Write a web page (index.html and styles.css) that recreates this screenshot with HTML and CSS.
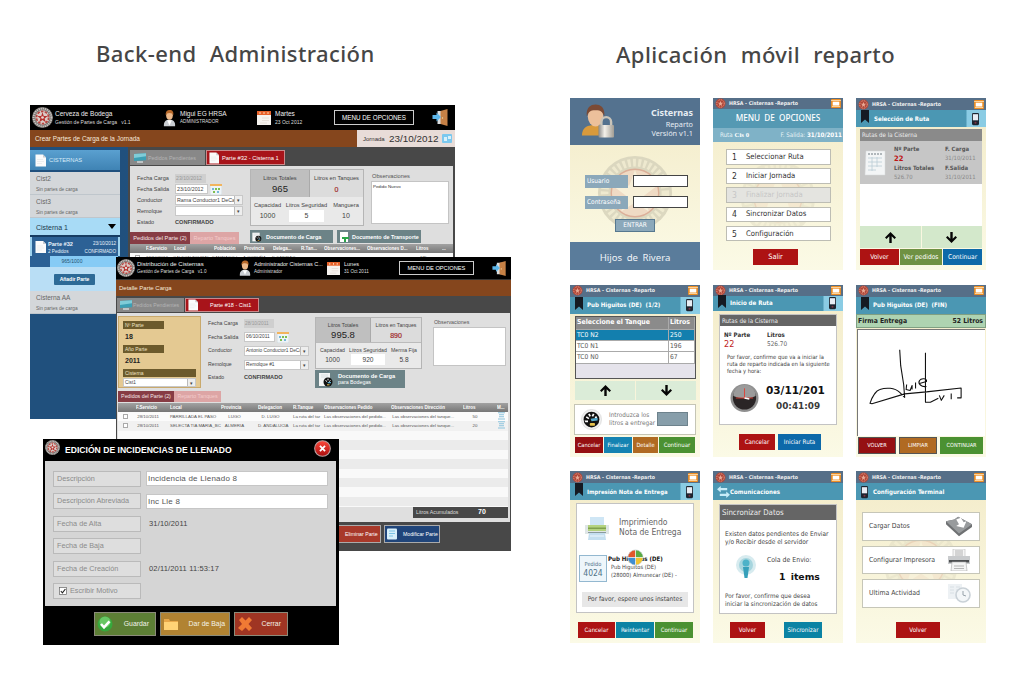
FILE: index.html
```html
<!DOCTYPE html>
<html lang="es">
<head>
<meta charset="utf-8">
<title>Cisternas</title>
<link rel="stylesheet" href="styles.css">
</head>
<body>
<svg class="defs" width="0" height="0">
  <defs>
    <linearGradient id="gRed" x1="0" y1="0" x2="0" y2="1"><stop offset="0" stop-color="#ff4a3d"/><stop offset="1" stop-color="#a80d0d"/></linearGradient>
    <linearGradient id="gMetal" x1="0" y1="0" x2="1" y2="0"><stop offset="0" stop-color="#8a8a8a"/><stop offset=".4" stop-color="#f4f1ea"/><stop offset="1" stop-color="#a19c93"/></linearGradient>
  </defs>
  <symbol id="logo" viewBox="0 0 20 20"><circle cx="10" cy="10" r="10" fill="#77726f"/><circle cx="10" cy="10" r="8.500" fill="none" stroke="#c9c5c2" stroke-width="1.800" stroke-dasharray="1.200 .8"/><circle cx="10" cy="10" r="6.800" fill="#d9cbc6"/><circle cx="10" cy="10" r="5.800" fill="none" stroke="#b8443f" stroke-width="1.600" stroke-dasharray="2.400 1.200"/><path d="M10 5l1.200 3.500 3.800.1-3 2.300 1.100 3.600-3.100-2.100-3.100 2.100L8 10.900 5 8.600l3.800-.1z" fill="#b5312d"/><circle cx="10" cy="10" r="1.300" fill="#ead9d4"/></symbol>
  <symbol id="logored" viewBox="0 0 20 20"><circle cx="10" cy="10" r="9" fill="#b04436"/><circle cx="10" cy="10" r="6.800" fill="none" stroke="#e0a08c" stroke-width="1.800" stroke-dasharray="2 1.600"/><path d="M10 5l1.300 3.500 3.700.2-3 2.300 1.100 3.500-3.100-2-3.100 2L8 11 5 8.700l3.700-.2z" fill="#e7a894"/></symbol>
  <symbol id="seal" viewBox="0 0 80 80"><circle cx="40" cy="40" r="39" fill="#d9d5bd"/><circle cx="40" cy="40" r="32" fill="none" stroke="#eee9cf" stroke-width="8" stroke-dasharray="3 2.500"/><circle cx="40" cy="40" r="25" fill="#efd8c2"/><path d="M40 16l6 16 17 .5-13.500 10.500 5 16.500L40 50 25.500 59.500l5-16.500L17 32.500 34 32z" fill="#f7efd9"/><circle cx="40" cy="40" r="25" fill="none" stroke="#d9a892" stroke-width="1.500"/></symbol>
  <symbol id="user" viewBox="0 0 14 18"><path d="M1 18c-.5-5 2-7 6-7s6.500 2 6 7z" fill="#c9cdd2"/><path d="M4.500 11.500L7 17l2.500-5.500z" fill="#fff"/><ellipse cx="7" cy="6" rx="3.600" ry="4.800" fill="#edb98a"/><path d="M3 6C2.500 1.500 5 .3 7.300.3c3 0 4.400 2.200 3.700 5.700-.8-1.500-1.500-2.400-4-2.400C4.500 3.600 4 4.300 3 6z" fill="#b8692a"/></symbol>
  <symbol id="cal" viewBox="0 0 14 14"><rect width="14" height="14" fill="#f6f3ef"/><rect width="14" height="4" fill="#e8622a"/><path d="M3 1v2M7 1v2M11 1v2" stroke="#fbd9b8"/><path d="M5 7h7M5 9.500h7M3 12h7" stroke="#e2d9d2" stroke-width=".8"/></symbol>
  <symbol id="calsm" viewBox="0 0 12 11"><rect y="1" width="12" height="10" fill="#eef4f7" stroke="#b9c4ca" stroke-width=".5"/><rect width="12" height="2" fill="#f2b45d"/><path d="M5 4h2v2H5zM8 4h2v2H8zM3 7h2v2H3z" fill="#7fbf4f"/><path d="M7 7h2v2H7zM2 4h2v2H2z" fill="#74b6d8"/></symbol>
  <symbol id="door" viewBox="0 0 16 17"><path d="M5 2h9v13H5z" fill="#d9dde0"/><path d="M8 2l7-2v17l-7-2z" fill="#c68146"/><circle cx="10" cy="9" r=".7" fill="#f7d9a0"/><path d="M0 6h4V3.500L8.500 8 4 12.500V10H0z" fill="#5cb6ea"/></symbol>
  <symbol id="monitor" viewBox="0 0 12 10"><path d="M0 1l12-.8v7L0 8z" fill="#3c9fb4"/><path d="M0 1l12-.8v3L0 5z" fill="#7fccd8"/><path d="M3 9h6" stroke="#d0d7d9" stroke-width="1.500"/></symbol>
  <symbol id="page" viewBox="0 0 11 12"><path d="M.5 0H8l3 3v9H.5z" fill="#fbfbfb"/><path d="M8 0v3h3z" fill="#c9ccd0"/><path d="M2 5h6M2 7h7M2 9h5" stroke="#e3e5e7" stroke-width=".6"/></symbol>
  <symbol id="note" viewBox="0 0 10 11"><rect width="10" height="11" rx="1" fill="#d8f0fb"/><path d="M2 2.500h6M2 5h6M2 7.500h4" stroke="#7cc4e6" stroke-width="1.200"/></symbol>
  <symbol id="list" viewBox="0 0 7 8"><path d="M0 .7h7M1 2.700h5M1 4.700h5M0 7h7" stroke="#8cc3dd" stroke-width="1.100"/></symbol>
  <symbol id="gauge" viewBox="0 0 24 24"><circle cx="12" cy="12" r="11.500" fill="#f0f0f0" stroke="#ccc" stroke-width=".6"/><circle cx="12" cy="12" r="9" fill="#111"/><path d="M6 9l3 2M9 5.500l1.500 3M14.500 5.500L13 8.500M18 9l-2 1" stroke="#fff" stroke-width="2"/><path d="M11 11l8-1v3l-7 1z" fill="#55aacd"/><rect x="10" y="16" width="6" height="3" rx="1" fill="#e7c34d"/><path d="M4 13h4v2H5z" fill="#fff"/></symbol>
  <symbol id="docg" viewBox="0 0 14 15"><path d="M0 1h11v13H0z" fill="#f4f6f6"/><path d="M2 3h7M2 5h7" stroke="#cfd6d8" stroke-width=".7"/><circle cx="9" cy="10" r="4.500" fill="#111"/><path d="M6.500 8.500l1.500 1M9 6.700v1.600M11.500 8.500l-1.300 1" stroke="#fff"/><path d="M8.500 10h3.500v1.300H9z" fill="#5fb3d0"/><path d="M8 12.300h2.500v1H8z" fill="#e7c34d"/></symbol>
  <symbol id="mail" viewBox="0 0 12 11"><rect width="12" height="11" rx="1" fill="#ef8f24"/><path d="M2 3.300h8V8H2z" fill="#fff"/><path d="M0 1.200h12v1.300H0zM1 8.700h10v1H1z" fill="#f9d3a0"/></symbol>
  <symbol id="phone" viewBox="0 0 8 14"><rect width="8" height="14" rx="1.500" fill="#1d2530"/><rect x="1" y="1.500" width="6" height="7" fill="#e8edf4"/><circle cx="4" cy="11.300" r="1.200" fill="#7c3444"/></symbol>
  <symbol id="ribbon" viewBox="0 0 8 13"><path d="M0 0h8v13L4 9.500 0 13z" fill="#151a22"/></symbol>
  <symbol id="up" viewBox="0 0 11 11"><path d="M5.500 0L11 5.500 9.500 7 6.700 4.300V11H4.300V4.300L1.500 7 0 5.500z" fill="#050505"/></symbol>
  <symbol id="down" viewBox="0 0 11 11"><path d="M5.500 11L11 5.500 9.500 4 6.700 6.700V0H4.300v6.700L1.500 4 0 5.500z" fill="#050505"/></symbol>
  <symbol id="printer" viewBox="0 0 24 24"><path d="M5 0h14v9H5z" fill="#cfe6f5"/><path d="M0 8h24v9H0z" fill="#dfe6e6"/><path d="M3 8h18v6H3z" fill="#b4d37f"/><path d="M3 10.500h18v1.500H3z" fill="#7fa04e"/><path d="M4 16h16l1 7H3z" fill="#c4dff0"/><path d="M3 15.500h18" stroke="#8a9a9c"/><path d="M5 19h14" stroke="#eef7fc"/></symbol>
  <symbol id="printer2" viewBox="0 0 22 22"><path d="M5 0h12v8H5z" fill="#f5f5f5" stroke="#bbb" stroke-width=".6"/><path d="M7 2h8M7 4h8M7 6h8" stroke="#999" stroke-width=".7"/><path d="M0 7h22v8H0z" fill="#c9cbcd"/><path d="M1 11h20v2.500H1z" fill="#4c4e50"/><path d="M4 13h14l1 9H3z" fill="#f4f4f4" stroke="#aaa" stroke-width=".6"/><path d="M6 17h10M6 19.500h10" stroke="#999" stroke-width=".7"/></symbol>
</svg>

<main class="slide">
  <section class="backend">
    <h1>Back-end Administración</h1>
    <div class="canvas">

      <article class="win one">
        <header class="bar">
          <svg class="lg"><use href="#logo"/></svg>
          <div class="two app"><b>Cerveza de Bodega</b><small>Gestión de Partes de Carga &nbsp; v1.1</small></div>
          <svg class="us"><use href="#user"/></svg>
          <div class="two who"><b>Migui EG HRSA</b><small>ADMINISTRADOR</small></div>
          <svg class="ca"><use href="#cal"/></svg>
          <div class="two day"><b>Martes</b><small>23 Oct 2012</small></div>
          <div class="menu">MENU DE OPCIONES</div>
          <svg class="dr"><use href="#door"/></svg>
        </header>
        <div class="brown"><span>Crear Partes de Carga de la Jornada</span><div class="jornada"><small>Jornada</small><b>23/10/2012</b><svg viewBox="0 0 10 9"><rect width="10" height="9" rx="1" fill="#7cc8ee"/><path d="M2 3h3v4H2zM6 2h3v3H6z" fill="#d9f1fb"/></svg></div></div>
        <div class="cols">
          <aside class="side">
            <div class="cis"><svg><use href="#page"/></svg>CISTERNAS</div>
            <div class="item"><b>Cist2</b><small>Sin partes de carga</small></div>
            <div class="item"><b>Cist3</b><small>Sin partes de carga</small></div>
            <div class="sel">Cisterna 1<i></i></div>
            <div class="parte">
              <svg><use href="#page"/></svg>
              <div class="pl"><b>Parte #32</b><small>2 Pedidos</small></div>
              <div class="pr"><small>23/10/2012</small><small>CONFIRMADO</small></div>
            </div>
            <div class="prog">965/1000</div>
            <div class="add"><span>Añadir Parte</span></div>
            <div class="item last"><b>Cisterna AA</b><small>Sin partes de carga</small></div>
          </aside>
          <div class="main">
            <div class="tabs"><div class="tab off"><svg><use href="#monitor"/></svg>Pedidos Pendientes</div><div class="tab on"><svg><use href="#page"/></svg>Parte #32 - Cisterna 1</div></div>
            <div class="panel">
              <div class="prow">
                <div class="form">
                  <label>Fecha Carga</label><div><span class="dis">23/10/2012</span></div>
                  <label>Fecha Salida</label><div><span class="in date">23/10/2012</span><svg class="cs"><use href="#calsm"/></svg></div>
                  <label>Conductor</label><div><span class="in sel2">Rama Conductor1 DeCar<i>▾</i></span></div>
                  <label>Remolque</label><div><span class="in sel2"><i>▾</i></span></div>
                  <label>Estado</label><div><strong>CONFIRMADO</strong></div>
                </div>
                <div class="stats">
                  <div class="st"><div class="dk"><small>Litros Totales</small><b>965</b></div><div><small>Litros en Tanques</small><b class="rd">0</b></div></div>
                  <div class="sb"><div><small>Capacidad</small><b>1000</b></div><div><small>Litros Seguridad</small><b class="wh">5</b></div><div><small>Manguera</small><b>10</b></div></div>
                </div>
                <div class="obs"><small>Observaciones</small><p>Pedido Nuevo</p></div>
              </div>
              <div class="trow"><span class="t1">Pedidos del Parte (2)</span><span class="t2">Reparto Tanques</span><span class="doc a"><svg><use href="#docg"/></svg>Documento de Carga</span><span class="doc b"><svg viewBox="0 0 10 10"><path d="M1 0h8v10H1z" fill="#fff"/><path d="M3 5h7v2H7v3H5V7H3z" fill="#2ba64a"/></svg>Documento de Transporte</span></div>
              <div class="th"><span></span><span>F.Servicio</span><span>Local</span><span>Población</span><span>Provincia</span><span>Delega...</span><span>R.Tan...</span><span>Observaciones...</span><span>Observaciones D...</span><span>Litros</span><span>...</span></div>
              <div class="td"><span><i class="ck"></i></span><span>19/10/2012</span><span>CALFON TOURAL</span><span>SANTIAGO L.</span><span>A CORUÑA</span><span>D.SANTIAG</span><span></span><span></span><span></span><span>&nbsp; 475</span><span></span></div>
            </div>
          </div>
        </div>
      </article>

      <article class="win dos">
        <header class="bar">
          <svg class="lg"><use href="#logo"/></svg>
          <div class="two app"><b>Distribución de Cisternas</b><small>Gestión de Partes de Carga &nbsp; v1.0</small></div>
          <svg class="us"><use href="#user"/></svg>
          <div class="two who"><b>Administrador Cisternas C...</b><small>Administrador</small></div>
          <svg class="ca"><use href="#cal"/></svg>
          <div class="two day"><b>Lunes</b><small>31 Oct 2011</small></div>
          <div class="menu">MENU DE OPCIONES</div>
          <svg class="dr"><use href="#door"/></svg>
        </header>
        <div class="brown"><span>Detalle Parte Carga</span></div>
        <div class="tabs"><div class="tab off"><svg><use href="#monitor"/></svg>Pedidos Pendientes</div><div class="tab on"><svg><use href="#page"/></svg>Parte #18 - Cist1</div></div>
        <div class="panel">
          <div class="prow">
            <div class="beige"><em>Nº Parte</em><b>18</b><em>Año Parte</em><b>2011</b><em class="w">Cisterna</em><span class="in">Cist1<i>▾</i></span></div>
            <div class="form">
              <label>Fecha Carga</label><div><span class="dis">28/10/2011</span></div>
              <label>Fecha Salida</label><div><span class="in date">06/10/2011</span><svg class="cs"><use href="#calsm"/></svg></div>
              <label>Conductor</label><div><span class="in sel2">Antonio Conductor1 DeCa<i>▾</i></span></div>
              <label>Remolque</label><div><span class="in sel2">Remolque #1<i>▾</i></span></div>
              <label>Estado</label><div><strong>CONFIRMADO</strong></div>
            </div>
            <div class="mid">
              <div class="stats">
                <div class="st"><div class="dk"><small>Litros Totales</small><b>995.8</b></div><div><small>Litros en Tanques</small><b class="rd">890</b></div></div>
                <div class="sb"><div><small>Capacidad</small><b>1000</b></div><div><small>Litros Seguridad</small><b class="wh">920</b></div><div><small>Merma Fija</small><b>5.8</b></div></div>
              </div>
              <div class="bigdoc"><svg><use href="#docg"/></svg><div><b>Documento de Carga</b><small>para Bodegas</small></div></div>
            </div>
            <div class="obs"><small>Observaciones</small><p></p></div>
          </div>
          <div class="trow"><span class="t1">Pedidos del Parte (2)</span><span class="t2">Reparto Tanques</span></div>
          <div class="th"><span></span><span>F.Servicio</span><span>Local</span><span>Provincia</span><span>Delegacion</span><span>R.Tanque</span><span>Observaciones Pedido</span><span>Observaciones Dirección</span><span>Litros</span><span>M...</span></div>
          <div class="td"><span><i class="ck"></i></span><span>&nbsp;28/10/2011</span><span>PARRILLADA EL PASO</span><span class="c">LUGO</span><span class="c">D. LUGO</span><span>La ruta del tar</span><span>Las observaciones del pedido...</span><span>&nbsp;Las observaciones del tanque...</span><span class="c">50</span><span><svg><use href="#list"/></svg></span></div>
          <div class="td"><span><i class="ck"></i></span><span>&nbsp;28/10/2011</span><span>SELECTA TIA MARIA_BC</span><span class="c">ALMERIA</span><span class="c">D. ANDALUCÍA</span><span>La ruta del tar</span><span>Las observaciones del pedido...</span><span>&nbsp;Las observaciones del tanque...</span><span class="c">20</span><span><svg><use href="#list"/></svg></span></div>
          <div class="stripes"></div>
          <div class="acc"><small>Litros Acumulados</small><b>70</b></div>
        </div>
        <footer><span class="fb red">Eliminar Parte</span><span class="fb blue"><svg><use href="#note"/></svg>Modificar Parte</span></footer>
      </article>

      <article class="win tres">
        <header><svg class="lg"><use href="#logo"/></svg><b>EDICIÓN DE INCIDENCIAS DE LLENADO</b><svg class="x" viewBox="0 0 18 18"><circle cx="9" cy="9" r="8.300" fill="url(#gRed)" stroke="#b9a3a3" stroke-width="1.100"/><path d="M6.300 6.300l5.400 5.400M11.700 6.300l-5.400 5.400" stroke="#fff" stroke-width="1.900"/></svg></header>
        <div class="body">
          <label>Descripción</label><span class="box">Incidencia de Llenado 8</span>
          <label>Descripción Abreviada</label><span class="box">Inc Lle 8</span>
          <label>Fecha de Alta</label><span class="v">31/10/2011</span>
          <label>Fecha de Baja</label><span class="v"></span>
          <label>Fecha de Creación</label><span class="v">02/11/2011 11:53:17</span>
          <label class="chk"><svg viewBox="0 0 8 8"><rect x=".4" y=".4" width="7.200" height="7.200" fill="#fff" stroke="#666" stroke-width=".7"/><path d="M1.800 4l1.600 1.800L6.400 2" fill="none" stroke="#222" stroke-width="1.100"/></svg>Escribir Motivo</label><span></span>
        </div>
        <footer>
          <span class="g"><svg viewBox="0 0 16 16"><circle cx="8" cy="8" r="7.500" fill="#36a83c"/><circle cx="8" cy="6" r="5.500" fill="#68c764"/><path d="M4 8l3 3.300 5.500-6" fill="none" stroke="#fff" stroke-width="2.600"/></svg>Guardar</span>
          <span class="y"><svg viewBox="0 0 16 16"><path d="M1 3h5l1 2h8v9H1z" fill="#e8a94a"/><path d="M1 6h14v8H1z" fill="#ffd375"/></svg>Dar de Baja</span>
          <span class="r"><svg viewBox="0 0 16 16"><path d="M2 4l3-3 3.500 3.500L12 1l3 3-3.500 4 3.500 4-3 3-3.500-3.500L5 15l-4-3 4-4z" fill="#f07a34"/></svg>Cerrar</span>
        </footer>
      </article>
    </div>
  </section>

  <section class="mobile">
    <h1>Aplicación móvil reparto</h1>
    <div class="phones">

      <div class="ph p1">
        <div class="top"><svg viewBox="0 0 36 36"><path d="M2 32c0-9 6-11 14-11s13 4 13 11z" fill="#d99a3c"/><ellipse cx="16" cy="12" rx="8" ry="10.500" fill="#ecc09b"/><path d="M7 12C6 3 11 0 16 0s10 3 9 12c-2-4-3-6-9-6s-7 2-9 6z" fill="#7b4a35"/><path d="M22 22v-4a5 5 0 0 1 10 0v4" fill="none" stroke="#c9c4b9" stroke-width="2.500"/><rect x="19" y="21" width="16" height="13" rx="1" fill="url(#gMetal)"/></svg><div><b>Cisternas</b><span>Reparto</span><span>Versión v1.1</span></div></div>
        <div class="mid1"><svg class="seal"><use href="#seal"/></svg>
          <div class="f"><label>Usuario</label><i></i></div><div class="f"><label>Contraseña</label><i></i></div><span class="ent">ENTRAR</span></div>
        <div class="bot">Hijos de Rivera</div>
      </div>

      <div class="ph p2">
        <div class="tb"><svg class="l"><use href="#logored"/></svg><b>HRSA - Cisternas -Reparto</b><svg class="m"><use href="#mail"/></svg></div>
        <div class="mo">MENU DE OPCIONES</div>
        <div class="ru"><span>Ruta <b>Cis 0</b></span><span>F. Salida: <b>31/10/2011</b></span></div>
        <div class="list"><svg class="seal"><use href="#seal"/></svg><div><i>1</i>Seleccionar Ruta</div><div><i>2</i>Iniciar Jornada</div><div class="d"><i>3</i>Finalizar Jornada</div><div><i>4</i>Sincronizar Datos</div><div><i>5</i>Configuración</div></div>
        <div class="btns"><span class="red">Salir</span></div>
      </div>

      <div class="ph p3">
        <div class="tb"><svg class="l"><use href="#logored"/></svg><b>HRSA - Cisternas -Reparto</b><svg class="m"><use href="#mail"/></svg></div>
        <div class="sub"><svg class="rb"><use href="#ribbon"/></svg><b>Selección de Ruta</b><svg class="pp"><use href="#phone"/></svg></div>
        <div class="lh">Rutas de la Cisterna</div>
        <div class="lr"><svg viewBox="0 0 22 26"><path d="M2 1h19v24H1z" fill="#f3f5f6" stroke="#d6d9db" stroke-width=".5"/><path d="M4 4h15" stroke="#9aa3a8" stroke-width="1.500" stroke-dasharray="2 1"/><path d="M4 8h14M4 12h14M4 16h14M4 20h8M8 7v14M13 7v10" stroke="#b9cbd5" stroke-width=".8"/></svg><div><b>Nº Parte</b><b class="rd">22</b><b>Litros Totales</b><span>526.70</span></div><div><b>F. Carga</b><span>31/10/2011</span><b>F.Salida</b><span>31/10/2011</span></div></div>
        <div class="wh"></div>
        <div class="ar"><span><svg><use href="#up"/></svg></span><span><svg><use href="#down"/></svg></span></div>
        <div class="btns"><span class="red">Volver</span><span class="olive">Ver pedidos</span><span class="blue">Continuar</span></div>
      </div>

      <div class="ph p4">
        <div class="tb"><svg class="l"><use href="#logored"/></svg><b>HRSA - Cisternas -Reparto</b><svg class="m"><use href="#mail"/></svg></div>
        <div class="sub"><svg class="rb"><use href="#ribbon"/></svg><b>Pub Higuitos (DE) &nbsp;(1/2)</b><svg class="pp"><use href="#phone"/></svg></div>
        <div class="tbl"><div class="h"><span>Seleccione el Tanque</span><span>Litros</span></div><div class="s"><span>TC0 N2</span><span>250</span></div><div><span>TC0 N1</span><span>196</span></div><div><span>TC0 N0</span><span>67</span></div></div>
        <div class="ar"><span><svg><use href="#up"/></svg></span><span><svg><use href="#down"/></svg></span></div>
        <div class="lit"><svg><use href="#gauge"/></svg><p>Introduzca los<br>litros a entregar</p><i></i></div>
        <div class="btns"><span class="dred">Cancelar</span><span class="blue2">Finalizar</span><span class="orange">Detalle</span><span class="green">Continuar</span></div>
      </div>

      <div class="ph p5">
        <div class="tb"><svg class="l"><use href="#logored"/></svg><b>HRSA - Cisternas -Reparto</b><svg class="m"><use href="#mail"/></svg></div>
        <div class="sub"><svg class="rb"><use href="#ribbon"/></svg><b>Inicio de Ruta</b><svg class="pp"><use href="#phone"/></svg></div>
        <div class="card"><div class="ch">Rutas de la Cisterna</div>
          <div class="np"><div><b>Nº Parte</b><em>22</em></div><div><b>Litros</b><span>526.70</span></div></div>
          <p>Por favor, confirme que va a iniciar la<br>ruta de reparto indicada en la siguiente<br>fecha y hora:</p>
          <div class="clk"><svg viewBox="0 0 30 30"><circle cx="15" cy="15" r="14.500" fill="#8f8f8f"/><circle cx="15" cy="15" r="12" fill="#2a2526"/><path d="M3.500 13a11.500 11.500 0 0 1 23 0c-6 3-16 3-23 0z" fill="#9b9b9b"/><path d="M15 5v10M6 15h18" stroke="#e33b2e" stroke-width=".9"/><path d="M15 15l5 1" stroke="#fff" stroke-width="1.400"/></svg><div><b>03/11/201</b><b class="t">00:41:09</b></div></div>
        </div>
        <div class="btns"><span class="red">Cancelar</span><span class="blue">Iniciar Ruta</span></div>
      </div>

      <div class="ph p6">
        <div class="tb"><svg class="l"><use href="#logored"/></svg><b>HRSA - Cisternas -Reparto</b><svg class="m"><use href="#mail"/></svg></div>
        <div class="sub plain"><svg class="rb"><use href="#ribbon"/></svg><b>Pub Higuitos (DE) &nbsp;(FIN)</b></div>
        <div class="fe"><b>Firma Entrega</b><b>52 Litros</b></div>
        <div class="sig"><svg viewBox="0 0 128 106"><g fill="none" stroke="#111" stroke-width="1.100" stroke-linejoin="round"><path d="M42 20l1 16 3 19 1 13-5-5c-5-5-14-5-20-3-4 1-8 8-10 14l2 .5 33-10 22-2 35-4v10h-4M68 23v50h5l8-4M49 55l-.5 5 4 1 2-5v4M58 53v6M62 54l7-2c1-3-5-4-7-1s2 7 7 6"/><path d="M82 66l2 5 3-5M94 64v6"/></g></svg></div>
        <div class="btns"><span class="dred">VOLVER</span><span class="orange">LIMPIAR</span><span class="green">CONTINUAR</span></div>
      </div>

      <div class="ph p7">
        <div class="tb"><svg class="l"><use href="#logored"/></svg><b>HRSA - Cisternas -Reparto</b><svg class="m"><use href="#mail"/></svg></div>
        <div class="sub"><svg class="rb"><use href="#ribbon"/></svg><b>Impresión Nota de Entrega</b><svg class="pp"><use href="#phone"/></svg></div>
        <div class="card">
          <div class="im"><svg><use href="#printer"/></svg><p>Imprimiendo<br>Nota de Entrega</p></div>
          <div class="pd"><div class="bx"><small>Pedido</small><b>4024</b></div><div class="tx"><b>Pub Higuitos (DE)</b><span>Pub Higuitos (DE)</span><span>(28000) Almunecar (DE) -</span></div>
            <svg class="ball" viewBox="0 0 18 18"><path d="M9 9V1a8 8 0 0 0-8 8z" fill="#e2572b"/><path d="M9 9h8a8 8 0 0 0-8-8z" fill="#5aab44"/><path d="M9 9v8a8 8 0 0 0 8-8z" fill="#f0c330"/><path d="M9 9H1a8 8 0 0 0 8 8z" fill="#3f8ed1"/><circle cx="9" cy="9" r="8" fill="none" stroke="#b9c7c9" stroke-width=".6"/><path d="M9 1v16M1 9h16" stroke="#fff" stroke-width=".7"/></svg></div>
          <div class="wt">Por favor, espere unos instantes</div>
        </div>
        <div class="btns"><span class="red">Cancelar</span><span class="teal">Reintentar</span><span class="green">Continuar</span></div>
      </div>

      <div class="ph p8">
        <div class="tb"><svg class="l"><use href="#logored"/></svg><b>HRSA - Cisternas -Reparto</b><svg class="m"><use href="#mail"/></svg></div>
        <div class="sub plain"><svg class="ex" viewBox="0 0 14 13"><path d="M0 3.500L4 0v2.300h7v2.400H4V7zM14 9.500L10 13v-2.300H3V8.300h7V6z" fill="#c8ecf8"/></svg><b>Comunicaciones</b></div>
        <div class="card"><div class="ch">Sincronizar Datos</div>
          <p>Existen datos pendientes de Enviar<br>y/o Recibir desde el servidor</p>
          <div class="q"><svg viewBox="0 0 24 24"><circle cx="12" cy="10" r="10" fill="#d7ebef"/><circle cx="12" cy="10" r="7" fill="#a6d5de"/><circle cx="12" cy="8" r="3.500" fill="#4db2c8"/><path d="M9 12h6l-1.500 11h-3z" fill="#36a0ba"/></svg><div><span>Cola de Envio:</span><b>1 items</b></div></div>
          <p class="p2b">Por favor, confirme que desea<br>iniciar la sincronización de datos</p>
        </div>
        <div class="btns"><span class="red">Volver</span><span class="teal">Sincronizar</span></div>
      </div>

      <div class="ph p9">
        <div class="tb"><svg class="l"><use href="#logored"/></svg><b>HRSA - Cisternas -Reparto</b><svg class="m"><use href="#mail"/></svg></div>
        <div class="sub plain"><svg class="pp0"><use href="#phone"/></svg><b>Configuración Terminal</b></div>
        <div class="opts">
          <svg class="seal"><use href="#seal"/></svg>
          <div>Cargar Datos<svg viewBox="0 0 28 22"><path d="M0 6l9-2 4-3 15 8v3L14 22 0 9z" fill="#6f7173"/><path d="M0 6l9-2 4-3 15 8-14 10z" fill="#989b9d"/><path d="M11 4l5-2 3 5 3-1-3 7-8-2 3-2z" fill="#fff"/></svg></div>
          <div>Configurar Impresora<svg><use href="#printer2"/></svg></div>
          <div>Ultima Actividad<svg viewBox="0 0 24 22"><path d="M1 2h14v15H1z" fill="#edf1f4"/><path d="M3 5h4M3 8h4M3 11h4M9 5h4M9 8h4" stroke="#d8dfe4"/><circle cx="16" cy="13" r="7" fill="#f3f6f8" stroke="#c9d1d7" stroke-width="1.600"/><path d="M16 9v4l3 1" stroke="#97a2aa" fill="none"/></svg></div>
        </div>
        <div class="btns"><span class="red">Volver</span></div>
      </div>
    </div>
  </section>
</main>
</body>
</html>
```
FILE: styles.css
```css
* { box-sizing: border-box; margin: 0; padding: 0; }
body { width: 1022px; height: 687px; background: #fff; overflow: hidden; font-family: "Liberation Sans", sans-serif; }
.defs { display: block; position: absolute; }
svg { display: block; flex: none; }
i { font-style: normal; }
.slide { display: grid; grid-template-columns: 570px 452px; height: 687px; }
h1 { font: 500 22px/30px "Noto Sans", sans-serif; color: #464646; white-space: nowrap; word-spacing: 7px; letter-spacing: .42px; }
.backend h1 { padding: 38px 0 0 96px; height: 98px; }
.mobile h1 { padding: 39px 0 0 46px; height: 98px; }
.canvas { position: relative; height: 589px; }

/* desktop windows */
.win { position: absolute; overflow: hidden; white-space: nowrap; font-size: 6px; line-height: 8px; color: #333; }
.one { left: 30px; top: 7px; width: 425px; height: 314px; background: linear-gradient(90deg, #20507d 90px, #2a5580 100%); }
.dos { left: 116px; top: 159px; width: 395px; height: 294px; background: #484848; }
.tres { left: 43px; top: 341px; width: 296px; height: 206px; background: #000; }
.bar { display: flex; align-items: center; background: #000; color: #fff; height: 25px; }
.dos .bar { height: 22px; }
.two { display: flex; flex-direction: column; }
.two b { font-weight: 400; font-size: 6.5px; line-height: 8px; color: #eee; }
.two small { font-size: 5px; line-height: 8px; color: #ddd; }
.lg { width: 21px; height: 21px; margin-left: 2px; }
.app { width: 108px; margin-left: 2px; }
.us { width: 13px; height: 18px; }
.who { width: 77px; margin-left: 4px; }
.who small { font-size: 4.600px; }
.ca { width: 14px; height: 14px; }
.day { width: 59px; margin-left: 4px; }
.menu { width: 80px; height: 15px; border: 1px solid #ccc; text-align: center; line-height: 13px; font-size: 6.300px; }
.dr { width: 17px; height: 17px; margin-left: 18px; }
.dos .lg { width: 18px; height: 18px; margin-left: 1px; }
.dos .app { width: 102px; }
.dos .app b { font-size: 6px; }
.dos .two small { font-size: 4.600px; }
.dos .who { width: 73px; margin-left: 3px; }
.dos .who b, .dos .day b { font-size: 5.500px; }
.dos .us { width: 12px; height: 16px; }
.dos .ca { width: 13px; height: 13px; }
.dos .day { width: 55px; }
.dos .menu { width: 75px; height: 14px; line-height: 12px; font-size: 5.700px; }
.dos .dr { width: 15px; height: 15px; }
.brown { height: 17px; background: #85461d; color: #f5e8dc; display: flex; justify-content: space-between; align-items: center; padding-left: 5px; font-size: 6.400px; }
.dos .brown { height: 17px; padding-left: 3px; font-size: 6px; border-top: 1px solid #333; }
.jornada { display: flex; align-items: center; width: 98px; height: 17px; background: #e8dcd8; color: #333; padding-left: 6px; }
.jornada small { font-size: 6px; width: 26px; }
.jornada b { font-weight: 400; font-size: 9.900px; width: 52px; }
.jornada svg { width: 10px; height: 9px; margin-left: 1px; }
.cols { display: grid; grid-template-columns: 90px 327px; column-gap: 8px; height: 272px; }
.side { padding-top: 3px; }
.cis { display: flex; align-items: center; height: 20px; background: linear-gradient(#5aa0d0, #3f83b4); color: #d8ebf7; font-size: 5.800px; padding-left: 5px; margin-bottom: 2px; }
.cis svg { width: 11px; height: 13px; margin-right: 3px; }
.item { height: 23px; background: #d4d7da; border-bottom: 1px solid #bfc6cc; padding: 3px 0 0 6px; color: #666; }
.item b { display: block; font-weight: 400; font-size: 6.500px; line-height: 8px; }
.item small { display: block; font-size: 4.800px; line-height: 13px; }
.sel { height: 19px; background: #a8dbf6; border-bottom: 2px solid #173d63; color: #21384c; font-size: 7px; padding: 6px 4px 0 6px; display: flex; justify-content: space-between; }
.sel i { width: 8px; height: 5px; background: #000; clip-path: polygon(0 0, 100% 0, 50% 100%); margin-right: 0; }
.parte { height: 19px; background: #2c6195; color: #e8f2fa; display: flex; border-left: 2px solid #9fd3ef; border-right: 2px solid #9fd3ef; padding: 3px 2px 0 3px; justify-content: space-between; }
.parte svg { width: 11px; height: 14px; }
.pl { width: 32px; } .pr { width: 34px; text-align: right; }
.parte b { display: block; font-size: 5.600px; line-height: 8px; }
.parte small { display: block; font-size: 4.600px; line-height: 7px; }
.pr small:first-child { line-height: 8px; }
.prog { height: 11px; margin-right: 2px; border-left: 20px solid #2c6195; background: #86cbf5; color: #24506f; font-size: 5px; line-height: 11px; text-align: center; padding-right: 24px; }
.add { height: 24px; background: #b9def5; padding: 7px 0 0 24px; }
.add span { display: block; width: 41px; height: 11px; border-radius: 1px; background: #2d6a96; color: #fff; font-weight: 700; font-size: 5px; line-height: 11px; text-align: center; }
.tabs { display: flex; background: #484848; height: 19px; padding-top: 3px; }
.one .main { background: #484848; }
.tab { display: flex; align-items: center; height: 15px; font-size: 5.600px; padding-left: 4px; gap: 3px; }
.tab.off { width: 75px; background: #888; color: #b4b4b4; margin-left: 2px; flex: none; font-size: 5.400px; gap: 2px; }
.tab.off svg { width: 12px; height: 10px; }
.tab.on { width: 79px; background: #a8141a; border: 1px solid #c9898a; color: #fff; margin-left: 1px; padding-left: 2px; font-size: 5.800px; }
.tab.on svg { width: 10px; height: 12px; }
.dos .tab { font-size: 5.500px; height: 14px; }
.dos .tab.off { width: 67px; font-size: 5.200px; gap: 1px; padding-left: 3px; }
.dos .tab.on { width: 74px; gap: 12px; }
.panel { background: #dedede; }
.one .panel { margin: 0 2px 0 2px; height: 91px; padding-top: 2px; }
.prow { display: flex; }
.prow > * { flex: none; }
.one .prow { height: 62px; }
.form { display: grid; grid-template-columns: 38px 74px; color: #444; align-content: start; }
.one .form { grid-auto-rows: 11px; padding: 4.500px 0 0 7px; width: 119px; }
.form label { font-size: 5.500px; line-height: 11px; }
.form div { display: flex; align-items: center; height: 11px; }
.form strong { font-size: 5.600px; }
.dis { background: #cfcfcf; color: #999; font-size: 5.200px; width: 31px; height: 9px; line-height: 9px; padding-left: 1px; }
.in { position: relative; background: #fff; border: 1px solid #c8c8c8; height: 10px; line-height: 8px; font-size: 5.300px; padding-left: 1px; color: #444; overflow: hidden; }
.in i { position: absolute; right: 0; top: 0; width: 8px; height: 8px; text-align: center; background: #eee; border-left: 1px solid #bbb; font-size: 5px; }
.date { width: 33px; } .sel2 { width: 68px; }
.cs { width: 12px; height: 11px; margin-left: 2px; }
.stats { width: 114px; height: 57px; background: #e9e9e9; border: 1px solid #b5b5b5; text-align: center; color: #444; }
.one .stats { margin: 1px 0 0 1px; }
.stats small { display: block; font-size: 5.700px; line-height: 9px; }
.stats b { display: block; font-weight: 400; }
.st { display: grid; grid-template-columns: 59px 1fr; height: 27px; border-bottom: 1px solid #bbb; }
.st > div { padding-top: 4px; background: #dcdcdc; }
.st .dk { background: #bfbfbf; border-right: 1px solid #aaa; }
.st b { font-size: 9.500px; line-height: 12px; color: #222; }
.st b.rd { font-size: 7px; color: #a02a2a; line-height: 14px; -webkit-text-stroke: .2px #a02a2a; }
.sb { display: grid; grid-template-columns: 33px 45px 1fr; padding-top: 4px; }
.sb b { font-size: 7px; line-height: 12px; color: #444; }
.sb b.wh { background: #fff; margin: 0 5px; }
.obs small { display: block; font-size: 5.700px; line-height: 9px; color: #555; padding-left: 1px; }
.obs p { background: #fff; border: 1px solid #c4c4c4; font-size: 4.400px; line-height: 7px; padding: 1px; }
.one .obs { margin: 4px 0 0 7px; width: 78px; }
.one .obs p { height: 43px; }
.trow { display: flex; font-size: 5.700px; }
.one .trow { height: 14px; align-items: end; }
.t1, .t2 { height: 12px; line-height: 12px; text-align: center; }
.t1 { width: 60px; background: #873c44; color: #f4e8e8; }
.t2 { width: 49px; background: #dda5a5; color: #f3cccc; font-size: 5.500px; }
.doc { display: flex; align-items: center; height: 13px; background: #6c8387; color: #fff; font-weight: 700; font-size: 5.500px; gap: 4px; margin-bottom: 1px; padding-left: 2px; }
.doc svg { width: 10px; height: 10px; }
.doc.a { width: 83px; margin-left: 11px; }
.doc.b { width: 84px; margin-left: 4px; font-size: 5.400px; gap: 3px; }
.th { display: grid; background: linear-gradient(#a2a2a2, #777); color: #fff; font-weight: 700; font-size: 4.500px; height: 9px; line-height: 9px; }
.td { display: grid; background: #fbfbfb; color: #555; font-size: 4.400px; height: 9px; line-height: 9px; }
.th span { overflow: hidden; }
.one .th, .one .td { grid-template-columns: 16px 28px 40px 30px 29px 28px 23px 43px 49px 26px 9px; }
.one .td { grid-template-columns: 16px 27px 39px 31px 29px 30px 23px 43px 49px 26px 9px; }
.c { text-align: center; padding-right: 10px; }
.ck { display: block; width: 5px; height: 5px; border: 1px solid #aaa; background: #fff; margin: 2px 0 0 5px; }
.dos .panel { margin: 0 1px; height: 209px; padding-top: 3px; background: #dfdfdf; }
.dos .tabs { padding-top: 2px; height: 17px; }
.dos .tab.off { margin-left: 1px; }
.dos .prow { height: 75px; }
.beige { display: flex; flex-direction: column; width: 83px; height: 72px; background: #e4c992; border: 1px solid #c9a96c; padding: 4px 4px 0 4px; margin-left: 1px; }
.beige em { font-style: normal; width: 41px; height: 8px; line-height: 8px; background: #6c5a2c; color: #eee3c5; font-size: 5px; padding-left: 2px; }
.beige em.w { width: 73px; }
.beige b { font-size: 7px; height: 16px; line-height: 16px; padding-left: 2px; color: #222; }
.beige .in { width: 73px; height: 10px; font-size: 5px; margin-top: 1px; }
.dos .form { grid-template-columns: 36px 70px; grid-auto-rows: 13.600px; width: 114px; padding: 1px 0 0 7px; }
.dos .form label, .dos .form div { height: 13.600px; line-height: 13.600px; font-size: 5.200px; }
.dos .in { line-height: 8px; font-size: 4.800px; }
.dos .sel2 { width: 65px; } .dos .date { width: 31px; } .dos .dis { font-size: 4.800px; width: 30px; }
.dos .mid { width: 107px; padding-top: 1px; }
.dos .stats { width: 107px; height: 52px; }
.dos .stats small { font-size: 5.200px; line-height: 8px; }
.dos .st { grid-template-columns: 55px 1fr; height: 25px; }
.dos .st > div { padding-top: 3px; }
.dos .st b { line-height: 11px; }
.dos .st b.rd { line-height: 13px; }
.dos .sb { padding-top: 3px; grid-template-columns: 33px 38px 1fr; }
.dos .sb b { line-height: 11px; font-size: 6.600px; }
.dos .sb b.wh { margin: 0 2px; }
.bigdoc { display: flex; align-items: center; width: 90px; height: 18px; margin-top: 1px; background: #6c8387; color: #fff; padding-left: 4px; gap: 5px; }
.bigdoc svg { width: 14px; height: 15px; }
.bigdoc b { display: block; font-size: 5.700px; line-height: 6px; }
.bigdoc small { display: block; font-size: 5.300px; line-height: 7px; }
.dos .obs { width: 73px; margin: 2px 0 0 11px; }
.dos .obs small { font-size: 5.300px; }
.dos .obs p { height: 39px; }
.dos .trow { height: 12px; margin-left: 1px; }
.dos .t1, .dos .t2 { font-size: 5.300px; line-height: 11px; height: 11px; }
.dos .t1 { width: 56px; } .dos .t2 { width: 47px; }
.dos .th, .dos .td { grid-template-columns: 18px 34px 51px 37px 35px 31px 67px 72px 34px 1fr; margin: 0 2px 0 1px; }
.dos .th { height: 9px; }
.dos .td { height: 9.400px; }
.dos .td + .td { background: #f1f1f1; }
.td svg { width: 7px; height: 8px; margin-left: 1px; }
.stripes { height: 76px; margin: 0 2px 0 1px; background: repeating-linear-gradient(#f9f9f9 0 9.400px, #ebebeb 9.400px 18.800px); }
.acc { display: flex; align-items: center; width: 95px; height: 11px; margin: 0 2px 0 auto; background: #484848; color: #ddd; padding-left: 3px; }
.acc small { font-size: 5.200px; width: 62px; } .acc b { font-size: 7px; color: #fff; }
.dos footer { display: flex; gap: 3px; padding: 3px 0 0 220px; }
.fb { display: flex; align-items: center; height: 18px; border: 1px solid #aaa; color: #fff; font-size: 5.200px; }
.fb.red { width: 45px; background: #a8392a; padding-left: 8px; }
.fb.blue { width: 56px; background: #20457a; padding-left: 2px; gap: 6px; }
.fb svg { width: 10px; height: 12px; }

.tres header { display: flex; align-items: center; height: 22px; color: #fff; }
.tres .lg { width: 15px; height: 15px; margin: -5px 0 0 2px; }
.tres header b { font-size: 8.600px; width: 254px; padding-left: 5px; }
.tres .x { width: 17px; height: 17px; margin-top: -3px; }
.tres .body { display: grid; grid-template-columns: 88px 182px; column-gap: 5px; grid-auto-rows: 16px; row-gap: 6.500px; margin: 0 3px 0 2px; height: 145px; padding: 9.500px 0 0 8px; background: #d5d5d5; align-content: start; align-items: center; }
.tres label { height: 16px; border: 1px solid #bababa; background: #dedede; color: #8b8b8b; font-size: 7.250px; line-height: 14px; padding-left: 3px; }
.box { height: 15px; background: #fff; border: 1px solid #c6c6c6; font: 8px/13px "Liberation Sans", sans-serif; letter-spacing: .2px; color: #555; padding-left: 1px; }
.v { font-size: 7.500px; letter-spacing: .15px; color: #444; padding-left: 3px; }
.chk { display: flex; gap: 3px; align-items: center; }
.chk svg { width: 8px; height: 8px; margin-left: 2px; }
.tres footer { display: flex; gap: 4px; padding: 6px 0 0 51px; }
.tres footer span { display: flex; align-items: center; justify-content: space-between; height: 24px; border: 1px solid #8b8b7a; color: #f3f3e8; font-size: 6.900px; padding: 0 6px 0 2px; }
.tres footer svg { width: 16px; height: 16px; }
.tres .g { width: 62px; background: #5d7f35; } .tres footer .y { width: 70px; background: #b18332; padding-right: 4px; } .tres .r { width: 54px; background: #9f3523; }

/* handheld screens */
.phones { display: grid; grid-template-columns: repeat(3, 130px); grid-auto-rows: 172px; column-gap: 13px; row-gap: 14.500px; }
.ph { display: flex; flex-direction: column; overflow: hidden; background: linear-gradient(#f3ebc8, #fbfae6); font: 6.500px/8px "DejaVu Sans Condensed", "DejaVu Sans", sans-serif; color: #444; white-space: nowrap; position: relative; }
.seal { position: absolute; width: 76px; height: 76px; opacity: .4; }
.p1 .top { display: flex; justify-content: space-between; height: 47px; background: #54728f; padding: 7px 7px 0 10px; color: #e7edf3; text-align: right; }
.top svg { width: 35px; height: 36px; margin-top: -1px; }
.top b { display: block; font: 700 9px/15px "Noto Sans", sans-serif; }
.top span { display: block; font: 7.300px/9px "Noto Sans", sans-serif; }
.mid1 { height: 97px; padding: 30px 0 0 15px; position: relative; }
.mid1 .seal { left: 27px; top: 10px; opacity: .9; }
.f { display: flex; gap: 5px; height: 21px; position: relative; }
.f label { width: 43px; height: 13px; line-height: 13px; background: #8ba8ba; color: #fff; padding-left: 2px; }
.f i { width: 55px; height: 12px; background: #fff; border: 1px solid #444; }
.ent { display: block; position: relative; width: 40px; height: 13px; margin: 2px 0 0 30px; background: #8ba8ba; border: 1px solid #56788f; color: #fff; line-height: 11px; text-align: center; }
.bot { height: 28px; background: #5a7c9b; color: #f0f4f8; font: 9.600px/31px "Noto Sans", sans-serif; text-align: center; word-spacing: 2px; }
.tb { display: flex; align-items: center; height: 12px; flex: none; background: #566f88; color: #f2f2f2; padding-left: 2px; }
.tb .l { width: 11px; height: 11px; }
.tb b { font: 700 5.200px/11px "DejaVu Sans Condensed", sans-serif; width: 105px; padding-left: 3px; }
.tb .m { width: 10px; height: 9px; }
.p2 .tb { height: 11px; }
.mo { height: 19px; flex: none; background: #5599b3; color: #fff; font: 500 8.200px/18px "Noto Sans", sans-serif; text-align: center; word-spacing: 2px; }
.ru { display: flex; justify-content: space-between; height: 14px; background: #7fb2c7; color: #e6f2f6; font-size: 6.200px; line-height: 14px; padding: 0 1px 0 7px; }
.ru b { font-family: "Liberation Serif", serif; font-size: 6.800px; color: #fff; } .ru span + span b { font: 700 6.200px "DejaVu Sans Condensed"; }
.list { display: flex; flex-direction: column; gap: 3.600px; padding: 7px 12px 0 13px; height: 107px; }
.list .seal { left: 27px; top: 62px; }
.list div { position: relative; display: flex; align-items: center; height: 15.600px; background: #fff; border: 1px solid #bdbdb4; font-size: 7.650px; color: #333; }
.list i { width: 19px; padding-left: 5px; font-size: 8.500px; }
.list .d { background: #e4e4e0; color: #c6c6c6; }
.btns { display: flex; flex: none; }
.btns span { height: 16px; line-height: 16px; text-align: center; color: #fff; font-size: 6.200px; }
.red { background: #ad1313; } .dred { background: #951012; } .olive { background: #6f9143; } .blue { background: #0d69a9; } .blue2 { background: #1583b2; } .orange { background: #b06a22; } .green { background: #4b9132; } .teal { background: #0b83a4; }
.p2 .btns span { width: 45px; margin: 0 0 0 40px; font-size: 7.300px; }
.sub { display: flex; align-items: center; flex: none; height: 17px; padding-left: 5px; background: linear-gradient(90deg, #4b97b3 110px, #8acce4 111px); color: #fff; }
.sub.plain { background: #4b97b3; }
.sub b { font: 700 6.100px/14px "DejaVu Sans Condensed", sans-serif; width: 103px; padding-left: 4px; }
.rb { width: 8px; height: 13px; margin-top: -4px; }
.pp { width: 7px; height: 14px; }
.p3 .sub b { padding-left: 5px; }
.lh { margin: 2px 4px 0; height: 12px; background: #8a8a8a; color: #eee; line-height: 12px; padding-left: 2px; font-size: 6.100px; flex: none; }
.lr { display: flex; margin: 0 4px; height: 43px; background: #c6c6c6; padding: 4px 0 0 4px; flex: none; }
.lr svg { width: 22px; height: 26px; margin: 5px 8px 0 0; }
.lr div { width: 51px; flex: none; } .lr div + div { width: 34px; } .lr b, .lr span { display: block; font-size: 5.900px; line-height: 9.300px; color: #555; } .lr span { color: #888; } .lr b.rd { color: #bd1515; font-size: 7.500px; }
.p3 .wh { background: #fff; margin: 0 4px; height: 42px; }
.ar { display: grid; grid-template-columns: 1fr 1fr; gap: 1px; height: 22px; margin: 0 4px; }
.ar span { background: #d3e8cb; display: grid; place-items: center; } .ar svg { width: 11px; height: 11px; }
.p3 .btns { margin: 1px 4px 0; gap: 1px; } .p3 .btns span { flex: 1; font-size: 6.600px; } .p3 .btns span:nth-child(2) { flex: 1.100; }
.tbl { margin: 2.500px 4px 0 5px; height: 63px; background: #e5e3eb; border: 1px solid #555; color: #555; }
.tbl div { display: grid; grid-template-columns: 93px 1fr; height: 11.400px; line-height: 11px; background: #fff; border-bottom: 1px solid #aaa; font-size: 6.700px; }
.tbl span { padding-left: 1px; border-right: 1px solid #aaa; }
.tbl .h { background: #8b8b8b; color: #fff; font-weight: 700; height: 12.500px; font-size: 6.900px; }
.tbl .s { background: #137fae; color: #fff; }
.p4 .ar { height: 19px; margin: 1.500px 4px 0 5px; } .p4 .ar span { background: #dbecd8; }
.lit { display: flex; align-items: center; height: 31px; margin: 4px 4px 2px 4px; background: #fff; border: 1px solid #c5c5b5; padding-left: 6px; }
.lit svg { width: 21px; height: 21px; } .lit p { width: 52px; padding-left: 7px; font-size: 6.400px; line-height: 8px; color: #777; } .lit i { width: 31px; height: 14px; background: #879eaa; border: 1px solid #6d828c; margin-left: 3px; }
.p4 .btns { gap: 1px; margin: 0 5px; } .p4 .btns span { width: 28px; font-size: 5.700px; } .p4 .btns span:nth-child(3) { width: 25px; } .p4 .btns span:nth-child(4) { width: 36px; font-size: 6px; }
.card { margin: 3px 6px 0; height: 110px; background: #fff; border: 1px solid #c3c3c3; position: relative; }
.ch { background: #656565; color: #eee; height: 11px; line-height: 11px; padding-left: 2px; font-size: 6.200px; }
.p5 .tb { height: 11px; } .p5 .sub { height: 15px; }
.p5 .card { height: 111px; }
.np { display: flex; padding: 4px 0 0 4px; height: 27px; } .np div { width: 43px; } .np b, .np span, .np em { display: block; font-size: 6.100px; line-height: 9px; color: #333; } .np em { font-style: normal; font-size: 9px; line-height: 11px; color: #c01c1c; } .np span { line-height: 11px; font-size: 6.400px; color: #666; }
.p5 p { font-size: 5.750px; line-height: 7px; padding: 1px 0 0 7px; }
.clk { display: flex; padding: 8px 0 0 10px; gap: 7px; } .clk svg { width: 29px; height: 30px; } .clk b { display: block; font: 700 10.500px/15px "DejaVu Sans", sans-serif; color: #111; } .clk .t { font-size: 8.900px; line-height: 16px; color: #3a3a3a; padding-left: 10px; }
.p5 .btns { gap: 3px; margin: 9px 0 0 26px; } .p5 .btns span { width: 36px; } .p5 .btns span + span { width: 43px; }
.fe { display: flex; justify-content: space-between; height: 14px; background: #aed3b1; border: 1px solid #7f9f82; line-height: 12px; color: #222; padding: 0 2px 0 1px; font-size: 6.800px; }
.sig { height: 107px; background: #fff; border: 1px solid #777; border-width: 1px 0 0 1px; margin: 1px 1px 1px; }
.sig svg { width: 127px; height: 105px; }
.p6 .btns { gap: 3px; margin: 0 2px; } .p6 .btns span { width: 38px; font-size: 5.600px; border: 1px solid #555; line-height: 15px; height: 17px; } .p6 .btns span:nth-child(3) { width: 43px; border-color: #4b9132; }
.im { display: flex; gap: 10px; padding: 13px 0 0 8px; height: 51px; } .im svg { width: 24px; height: 24px; } .im p { font-size: 8.500px; line-height: 10px; color: #666; }
.p7 .sub b { font-size: 5.900px; }
.pd { display: flex; padding-left: 2px; height: 37px; position: relative; } .bx { width: 28px; height: 27px; border: 1px solid #93b8d0; background: #eef6fb; text-align: center; color: #4f7388; } .bx small { display: block; font-size: 5.600px; line-height: 8px; padding-top: 4px; } .bx b { display: block; font-size: 8.500px; line-height: 11px; font-weight: 500; }
.tx { padding-left: 1px; } .tx b, .tx span { display: block; font-size: 6.100px; line-height: 8px; } .tx span { padding-left: 3px; font-size: 5.700px; } .tx b { color: #111; }
.ball { position: absolute; left: 50px; top: -6px; width: 17px; height: 17px; }
.wt { margin: 0 5px; height: 15px; line-height: 15px; background: #e7e7e7; text-align: center; font-size: 6.500px; }
.p7 .btns { gap: 1px; margin: 9px 0 0 8px; } .p7 .btns span { width: 37px; font-size: 6px; } .p7 .btns span + span { width: 38px; }
.p8 .card { margin-top: 4px; } .p8 .ch { height: 15px; line-height: 15px; font-size: 7.800px; padding-left: 2px; font-weight: 500; }
.p8 .sub { padding-left: 4px; } .p8 .sub b { padding-left: 0; } .ex { width: 13px; height: 12px; }
.p8 p { font-size: 6.500px; line-height: 8px; padding: 10px 0 0 5px; } .q { display: flex; height: 36px; padding: 9px 0 0 14px; gap: 9px; } .q svg { width: 24px; height: 24px; } .q span { display: block; font-size: 6.900px; line-height: 11px; } .q b { display: block; color: #111; font: 700 9.300px/21px "DejaVu Sans", sans-serif; padding-left: 12px; word-spacing: 2px; }
.p8 p.p2b { font-size: 6.300px; }
.p8 .btns { margin: 8px 0 0 17px; gap: 19px; } .p8 .btns span { width: 35px; } .p8 .btns span + span { width: 38px; }
.pp0 { width: 7px; height: 14px; } .p9 .sub b { padding-left: 5px; }
.opts { display: flex; flex-direction: column; gap: 5px; padding: 12px 6px 0; height: 122px; } .opts .seal { left: 27px; top: 55px; } .opts div { position: relative; display: flex; align-items: center; justify-content: space-between; height: 28.500px; background: #fff; border: 1px solid #c6c6b8; padding: 0 7px 0 6px; font-size: 6.900px; } .opts div svg { width: 26px; height: 22px; }
.p9 .btns { padding-left: 40px; } .p9 .btns span { width: 44px; }
```
